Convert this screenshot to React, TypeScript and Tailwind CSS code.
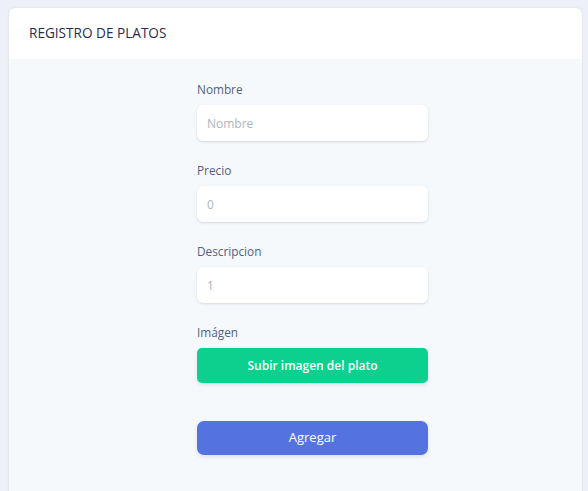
export default function App() {
  return (
    <div className="min-h-[491px] bg-[#edf0f6] pl-[9px] pr-[6px] pt-[8px] font-['Open_Sans',sans-serif]">
      <div className="overflow-hidden rounded-t-md bg-white shadow-[0_0_2px_rgba(136,152,170,0.25)]">
        {/* Header */}
        <div className="flex h-[52px] items-center border-b border-[#f4f6fa] px-[20px]">
          <h3 className="text-[13.6px] font-normal text-[#2b2b4f]">REGISTRO DE PLATOS</h3>
        </div>

        {/* Body */}
        <div className="h-[440px] bg-[#f6f9fc] pt-[20px]">
          <form className="ml-[188px] w-[231px]">
            <Field label="Nombre" placeholder="Nombre" />
            <Field label="Precio" placeholder="0" />
            <Field label="Descripcion" placeholder="1" />

            <label className="block text-[11.8px] leading-[18px] text-[#525f7f]">Imágen</label>
            <button
              type="button"
              className="mt-[7px] flex h-[35px] w-full items-center justify-center rounded-[5px] bg-[#0ed08e] text-[12px] font-semibold text-white shadow-[0_2px_4px_rgba(50,50,93,0.12)]"
            >
              Subir imagen del plato
            </button>

            <button
              type="button"
              className="mt-[38px] flex h-[34px] w-full items-center justify-center rounded-[7px] bg-[#5473e1] text-[13px] text-white shadow-[0_2px_4px_rgba(50,50,93,0.12)]"
            >
              Agregar
            </button>
          </form>
        </div>
      </div>
    </div>
  );
}

function Field({ label, placeholder }: { label: string; placeholder: string }) {
  return (
    <div className="mb-[20px]">
      <label className="block text-[11.8px] leading-[18px] text-[#525f7f]">{label}</label>
      <input
        placeholder={placeholder}
        className="mt-[7px] block h-[36px] w-full rounded-[6px] bg-white px-[10px] text-[12px] text-[#8898aa] shadow-[0_1px_3px_rgba(50,50,93,0.15),0_1px_0_rgba(0,0,0,0.02)] outline-none placeholder:text-[#adb5bd]"
      />
    </div>
  );
}
